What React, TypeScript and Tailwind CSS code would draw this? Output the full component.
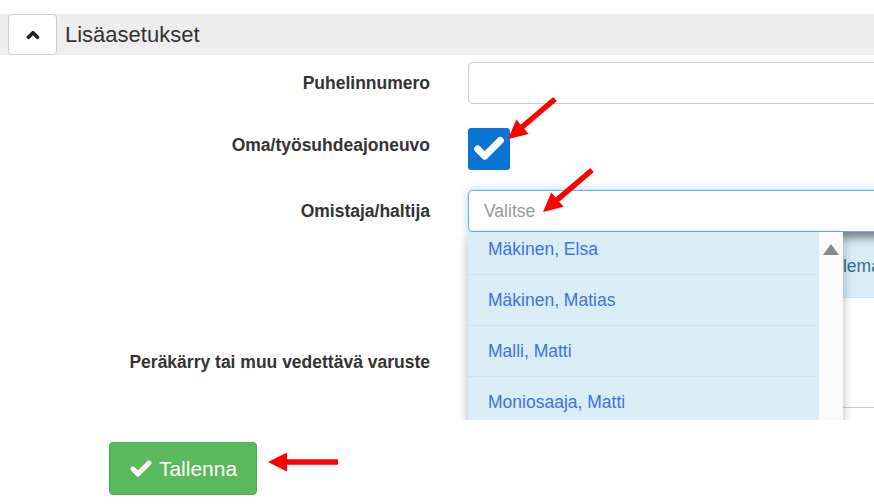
import { ChevronUp, Check } from "lucide-react";

const owners = ["Mäkinen, Elsa", "Mäkinen, Matias", "Malli, Matti", "Moniosaaja, Matti", "Nieminen, Pekka"];

// red annotation arrow from (x1,y1) to tip (x2,y2)
const Arrow = ({ x1, y1, x2, y2 }: { x1: number; y1: number; x2: number; y2: number }) => {
  const dx = x2 - x1;
  const dy = y2 - y1;
  const len = Math.hypot(dx, dy);
  const ux = dx / len;
  const uy = dy / len;
  const headLen = 19;
  const headW = 9.5;
  const bx = x2 - ux * headLen;
  const by = y2 - uy * headLen;
  const pts = `${x2},${y2} ${bx - uy * headW},${by + ux * headW} ${bx + uy * headW},${by - ux * headW}`;
  return (
    <g>
      <line x1={x1} y1={y1} x2={bx + ux * 2} y2={by + uy * 2} stroke="#f00" strokeWidth={5.5} />
      <polygon points={pts} fill="#f00" />
    </g>
  );
};

export default function App() {
  return (
    <div className="relative h-[504px] w-[874px] overflow-hidden bg-white font-['Liberation_Sans',Arial,sans-serif] text-[#333]">
      <div className="pt-[14px]">
        <div className="flex h-[41px] items-center bg-[#eee]">
          <button className="ml-[8px] flex h-[41px] w-[49px] items-center justify-center rounded-[4px] border border-[#ccc] bg-white">
            <ChevronUp size={18} strokeWidth={5} className="text-[#222]" />
          </button>
          <span className="ml-[8px] text-[22px] leading-none">Lisäasetukset</span>
        </div>
      </div>

      <div className="relative h-[365px] overflow-hidden">
        <div className="grid grid-cols-[430px_420px] gap-x-[38px] pt-[7px] text-[17.5px]">
          <label className="flex h-[42px] items-center justify-end font-bold">Puhelinnumero</label>
          <div className="h-[42px] rounded-[4px] border border-[#ccc]" />

          <label className="mt-[24px] flex h-[42px] items-center justify-end pb-[8px] font-bold">
            Oma/työsuhdeajoneuvo
          </label>
          <div className="mt-[24px] h-[42px]">
            <div className="flex h-[42px] w-[42px] items-center justify-center rounded-[3px] bg-[#0a74d2]">
              <Check size={34} strokeWidth={5} className="text-white" />
            </div>
          </div>

          <label className="mt-[20px] flex h-[42px] items-center justify-end font-bold">Omistaja/haltija</label>
          <div className="relative mt-[20px]">
            <div className="flex h-[42px] items-center rounded-[4px] border border-[#66afe9] pl-[15px] text-[#999] shadow-[0_0_8px_rgba(102,175,233,0.6)]">
              Valitse
            </div>
            <div className="h-[66px] whitespace-nowrap border-b border-[#bce8f1] bg-[#d9edf7] pt-[21px] pl-[338px] text-[#31708f] shadow-[inset_0_10px_8px_-4px_rgba(0,0,0,0.45)]">
              Problema
            </div>
            <div className="absolute top-[42px] left-0 z-10 flex h-[200px] w-[375px] bg-white shadow-[0_4px_10px_rgba(0,0,0,0.3)]">
              <ul className="h-full flex-1 overflow-hidden">
                <div className="-mt-[8px]">
                  {owners.map((o) => (
                    <li
                      key={o}
                      className="flex h-[51px] items-center border-b border-[#ddd] bg-[#d9edf7] pl-[20px] text-[#4270dd]"
                    >
                      {o}
                    </li>
                  ))}
                </div>
              </ul>
              <div className="flex w-[25px] justify-center border-l border-[#e8e8e8] bg-[#fafafa] pt-[12px]">
                <div className="h-0 w-0 border-x-[8px] border-b-[11px] border-x-transparent border-b-[#888]" />
              </div>
            </div>
          </div>

          <label className="flex h-[108px] items-center justify-end pt-[20px] font-bold">
            Peräkärry tai muu vedettävä varuste
          </label>
          <div className="h-[110px] border-b border-[#ccc]" />
        </div>
      </div>

      <div className="pt-[22px] pl-[109px]">
        <button className="flex h-[53px] w-[148px] items-center justify-center gap-[6px] rounded-[4px] border border-[#4cae4c] bg-[#5cb85c] text-[21px] text-white">
          <Check size={24} strokeWidth={5} />
          Tallenna
        </button>
      </div>

      <svg className="pointer-events-none absolute inset-0" width={874} height={504}>
        <Arrow x1={555} y1={99} x2={508} y2={139} />
        <Arrow x1={592} y1={170} x2={543} y2={212} />
        <Arrow x1={338} y1={462} x2={268} y2={462} />
      </svg>
    </div>
  );
}
